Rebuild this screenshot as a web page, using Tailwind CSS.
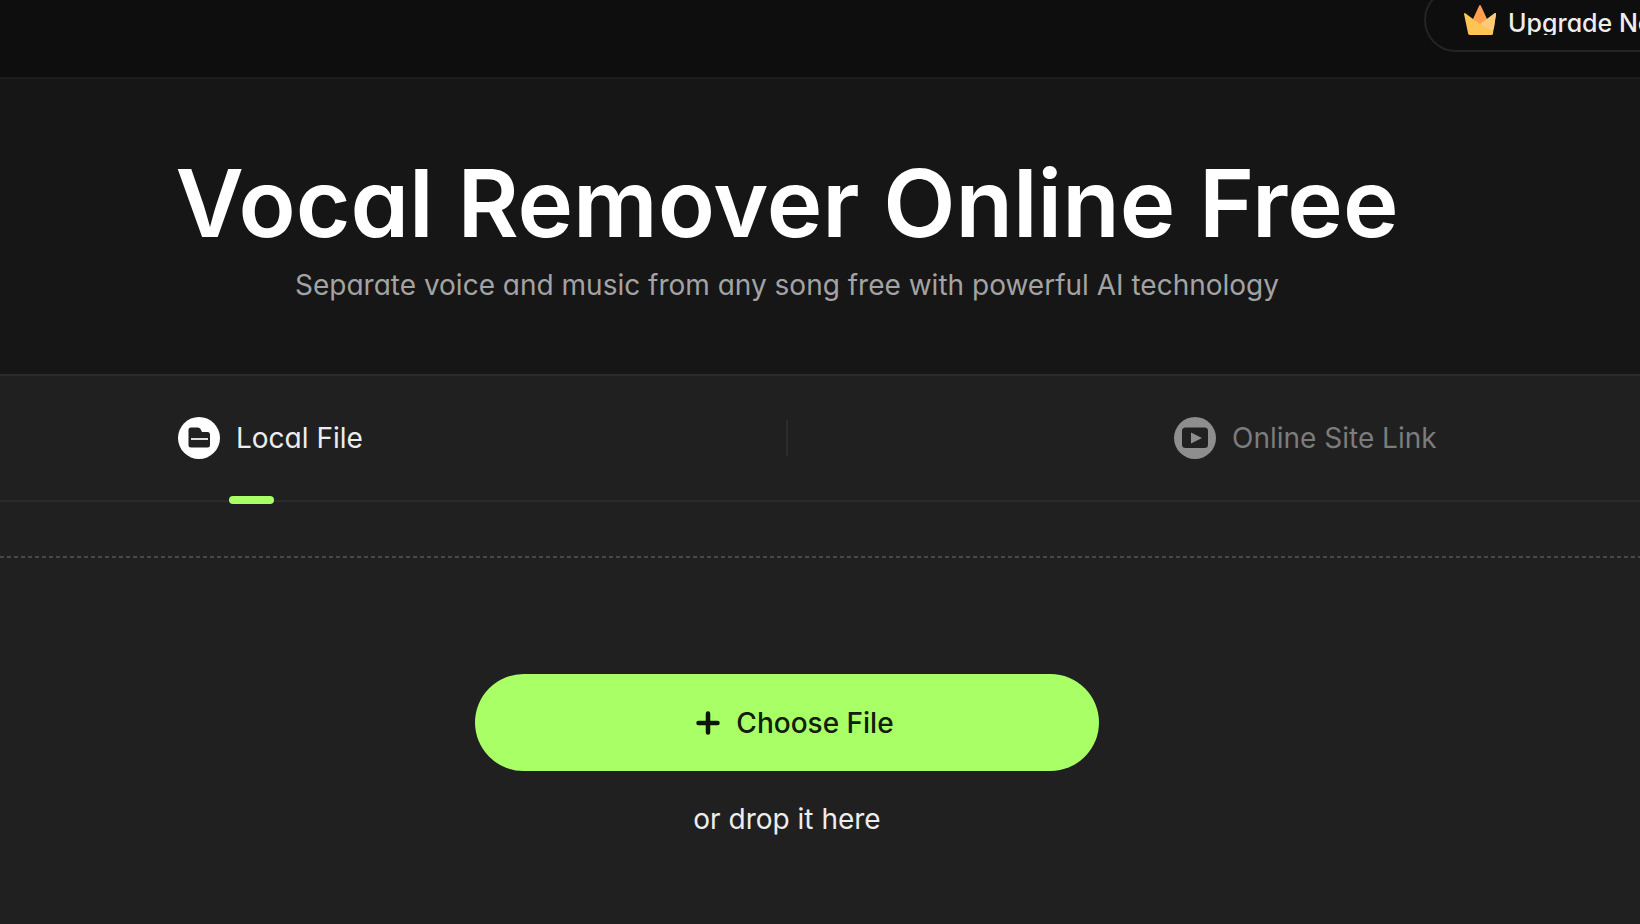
<!DOCTYPE html>
<html lang="en">
<head>
<meta charset="utf-8">
<meta name="viewport" content="width=device-width, initial-scale=1">
<title>Vocal Remover Online Free</title>
<script src="https://cdn.jsdelivr.net/npm/@tailwindcss/browser@4"></script>
</head>
<body class="flex min-h-screen flex-col overflow-x-hidden bg-[#202020] font-['Inter','Roboto',sans-serif] text-white [font-feature-settings:'cv11']">
  <header class="flex h-[79px] items-start justify-end overflow-hidden border-b-2 border-[#1c1c1c] bg-[#0e0e0e]">
    <button type="button" class="-mt-3 -mr-8 flex h-16 w-[248px] shrink-0 items-center gap-3 rounded-full border-2 border-[#242424] pl-[38px] text-[25px] font-medium whitespace-nowrap text-[#ededed]">
      <svg class="h-[30px] w-8 shrink-0" viewBox="0 0 32 30" aria-hidden="true">
        <path d="M9 14 15 1Q16 -1 17 1L23 14 16 21Z" fill="#fd9f4e"/>
        <path d="M1 8Q0 8 0 9L4 28Q4 30 6 30H27Q29 30 29 28L16 21 9 14Z" fill="#ffc453"/>
        <path d="M9 14 16 19 23 14 31 8Q32 8 32 9L29 28Q29 30 27 30H6Z" fill="#ffc453"/>
        <path d="M31 8Q32 8 32 9L30 23 28 26 16 19 23 14Z" fill="#ffcb7a"/>
      </svg>
      <span class="h-[30px] overflow-hidden leading-9">Upgrade Now</span>
    </button>
  </header>

  <main class="flex grow flex-col">
    <section class="flex h-[295px] flex-col items-center bg-[#161616] pt-[68px] pr-[66px] text-center">
      <h1 class="text-[94px] leading-[112px] font-semibold whitespace-nowrap">Vocal Remover Online Free</h1>
      <p class="mt-2 text-[28px] leading-9 whitespace-nowrap text-[#a3a3a3]">Separate voice and music from any song free with powerful AI technology</p>
    </section>

    <div role="tablist" class="grid h-[128px] grid-cols-[minmax(0,1fr)_2px_minmax(0,1fr)] items-center border-y-2 border-[#2b2b2b] pr-[66px] text-[28px]">
      <div class="relative flex h-full items-center pl-[178px]">
        <button type="button" role="tab" aria-selected="true" class="flex items-center gap-4 whitespace-nowrap text-[#ededed]">
          <svg class="size-[42px]" viewBox="0 0 42 42" aria-hidden="true">
            <circle cx="21" cy="21" r="21" fill="#fff"/>
            <path d="M13 10.500H20Q21.500 10.500 22.500 12L24 15H29.500Q32 15 32 17.500V28Q32 30.500 29.500 30.500H13Q10.500 30.500 10.500 28V13Q10.500 10.500 13 10.500Z" fill="#202020"/>
            <path d="M13 22H30" stroke="#fff" stroke-width="1.700"/>
          </svg>
          Local File
        </button>
        <span class="absolute -bottom-1 left-[229px] h-2 w-[45px] rounded-full bg-[#a9ff66]"></span>
      </div>
      <span class="h-9 bg-[#2d2d2d]"></span>
      <div class="flex h-full items-center pl-[386px]">
        <button type="button" role="tab" aria-selected="false" class="flex items-center gap-4 whitespace-nowrap text-[#7c7c7c]">
          <svg class="size-[42px]" viewBox="0 0 42 42" aria-hidden="true">
            <circle cx="21" cy="21" r="21" fill="#8e8e8e"/>
            <rect x="8" y="10.500" width="26" height="20.500" rx="3.500" fill="#202020"/>
            <path d="M17 15.500 28 21 17 26.500Z" fill="#8e8e8e"/>
          </svg>
          Online Site Link
        </button>
      </div>
    </div>

    <section class="mt-[54px] flex grow flex-col items-center pr-[66px]">
      <div class="-mr-[66px] h-0.5 self-stretch bg-[repeating-linear-gradient(90deg,#484848_0_4px,#202020_4px_7px)]"></div>
      <button type="button" class="mt-[116px] flex h-[97px] w-[624px] items-center justify-center gap-4 rounded-full bg-[#a9ff66] pl-4 text-[28px] font-medium text-[#10200a]">
        <svg class="size-6" viewBox="0 0 24 24" fill="none" stroke="#0b1405" stroke-width="4.500" stroke-linecap="round" aria-hidden="true"><path d="M12 2.500V21.500M2.500 12H21.500"/></svg>
        Choose File
      </button>
      <p class="mt-[30px] text-[28px] leading-9 text-[#ededed]">or drop it here</p>
    </section>
  </main>
</body>
</html>
